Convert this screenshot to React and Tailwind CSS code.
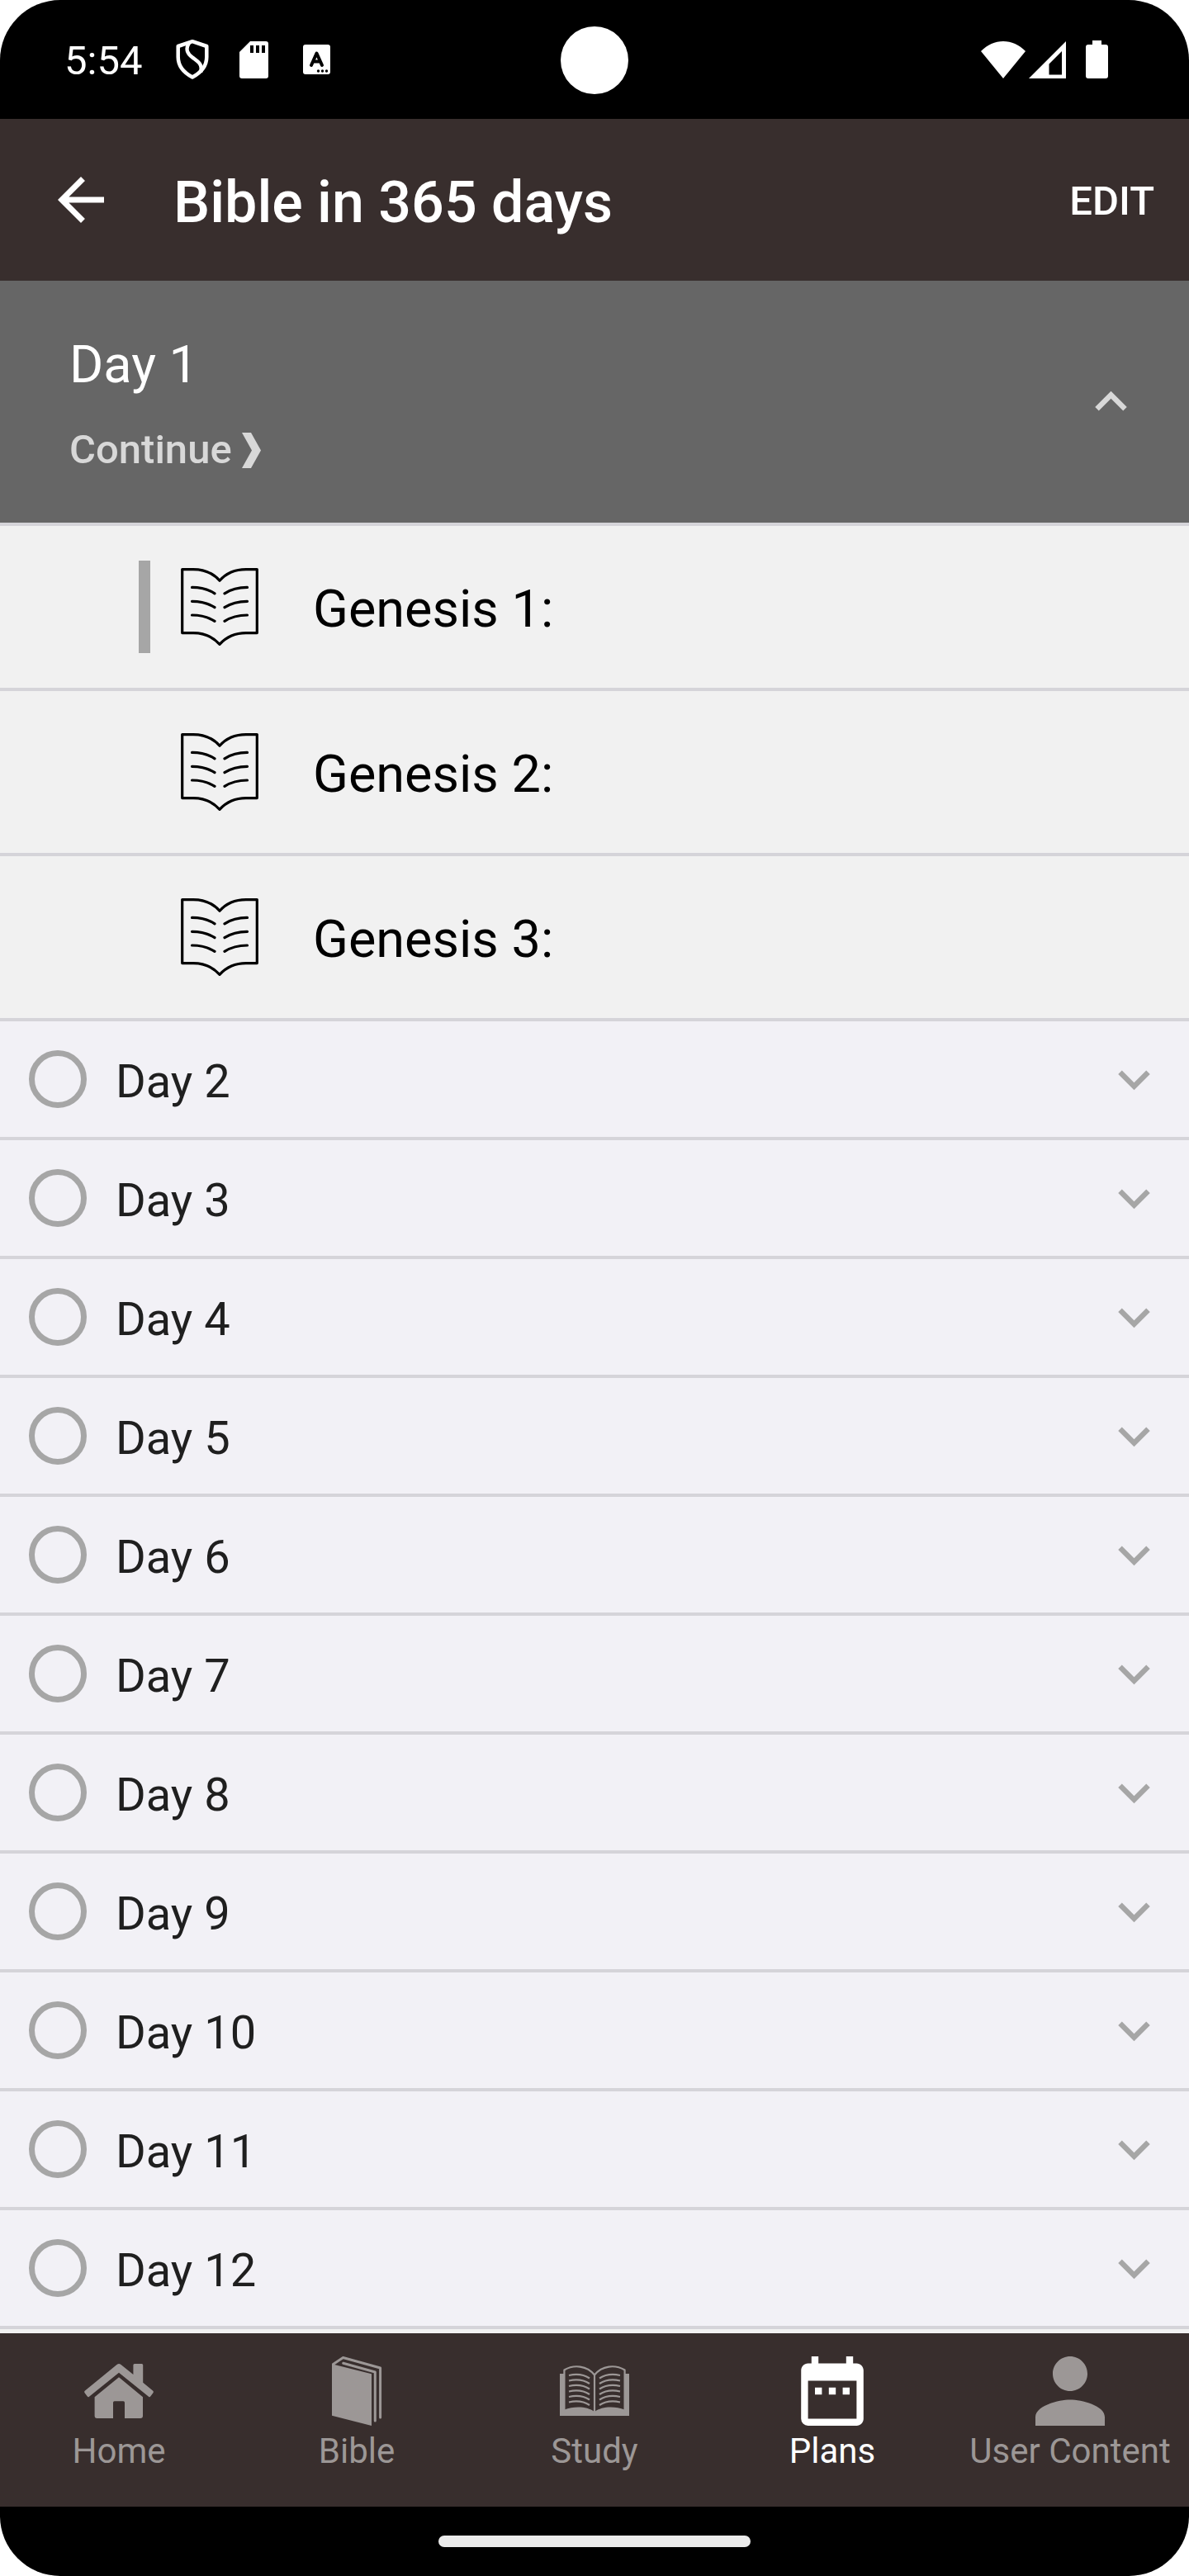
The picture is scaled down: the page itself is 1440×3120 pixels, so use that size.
import React, { useState } from "react";
import { MdArrowBack, MdExpandLess, MdExpandMore } from "react-icons/md";

const days = [2, 3, 4, 5, 6, 7, 8, 9, 10, 11, 12];
const chapters = ["Genesis 1:", "Genesis 2:", "Genesis 3:"];

function ShieldIcon() {
  return (
    <svg width="42" height="50" viewBox="0 0 42 50" fill="none" stroke="#fff" strokeWidth="4.5" strokeLinejoin="round">
      <path d="M21 3.2 38.3 9v13c0 11-7 19-17.300 24.500C10.700 41 3.700 33 3.700 22V9z" />
      <path d="M17 5c-5 8-2 13 4 17.500s13 8 10 18" />
    </svg>
  );
}

function SdCardIcon() {
  return (
    <svg width="35" height="45" viewBox="0 0 35 45">
      <path fill="#fff" d="M13 0h19a3 3 0 0 1 3 3v39a3 3 0 0 1-3 3H3a3 3 0 0 1-3-3V13z" />
      <path d="M13 5h4v9h-4zM20 5h4v9h-4zM27 5h4v9h-4z" />
    </svg>
  );
}

function KeyboardIcon() {
  return (
    <svg width="33" height="36" viewBox="0 0 33 36">
      <rect width="33" height="36" rx="3" fill="#fff" />
      <path d="m10 25 6.500-14.500L23 25M12 20.500h9" fill="none" stroke="#000" strokeWidth="4" strokeLinecap="round" strokeLinejoin="round" />
      <circle cx="18.500" cy="32" r="1.700" />
      <circle cx="23.500" cy="32" r="1.700" />
      <circle cx="28.500" cy="32" r="1.700" />
    </svg>
  );
}

function WifiIcon() {
  return (
    <svg width="54" height="45" viewBox="0 0 54 45" fill="#fff">
      <path d="M27 45 0 12C8 4 17 0 27 0s19 4 27 12z" />
    </svg>
  );
}

function SignalIcon() {
  return (
    <svg width="45" height="45" viewBox="0 0 45 45" fill="#fff" fillRule="evenodd">
      <path d="M45 0v45H0zM40 12 24.500 27.500v13H40z" />
    </svg>
  );
}

function BatteryIcon() {
  return (
    <svg width="27" height="46" viewBox="0 0 27 46" fill="#fff">
      <path d="M8 0h11v5h5a3 3 0 0 1 3 3v35a3 3 0 0 1-3 3H3a3 3 0 0 1-3-3V8a3 3 0 0 1 3-3h5z" />
    </svg>
  );
}

function OpenBookIcon() {
  return (
    <svg width="94" height="94" viewBox="0 0 94 94" fill="none" stroke="#000" strokeWidth="3.200" strokeLinecap="round" strokeLinejoin="round">
      <path d="M1.700 1.600H15C29 1.600 39 6 47 15.300 55 6 65 1.600 79 1.600h13.300v77H79c-14 0-24 5-32 13.700-8-8.700-18-13.700-32-13.700H1.700z" />
      <path d="M13.500 23.400c12 0 20 2.500 27.500 7.400M13.500 40.300c12 0 20 2.500 27.500 7.400M13.500 57c12 0 20 2.500 27.500 7.400M80.500 23.400c-12 0-20 2.500-27.500 7.400M80.500 40.300c-12 0-20 2.500-27.500 7.400M80.500 57c-12 0-20 2.500-27.500 7.400" />
    </svg>
  );
}

function HomeIcon() {
  return (
    <svg width="84" height="84" viewBox="0 0 84 84" fill="currentColor">
      <path d="M39.500 10q2.500-2 5 0l14.900 12V10.500q0-1.500 1.500-1.500h8.800q1.500 0 1.500 1.500v21.200L83 41.500q1.500 1.400.400 2.800l-3.200 4.200q-1 1.300-2.200.200L42 19.700 6 48.700q-1.200 1.100-2.200-.200L.600 44.300q-1.100-1.400.400-2.800z" />
      <path d="m42 25.300 29 24V72q0 3-3 3H49V56q0-1.700-1.700-1.700H36.700Q35 54.300 35 56v19H15.600q-3 0-3-3V49.300z" />
    </svg>
  );
}

function BibleIcon() {
  return (
    <svg width="84" height="84" viewBox="0 0 84 84">
      <path fill="currentColor" d="m12 9.300 48 12V84l-48-12.300z" />
      <path d="m13.500 9.500 12-8L70.600 14v60M25.700 8.300 64.300 19v59" fill="none" stroke="currentColor" strokeWidth="3" strokeLinecap="round" strokeLinejoin="round" />
    </svg>
  );
}

function StudyIcon() {
  return (
    <svg width="84" height="84" viewBox="0 0 84 84" fill="none" stroke="currentColor">
      <path strokeWidth="2.200" d="M5.400 65V16.500C17 9.500 33 11 42 22.500c9-11.500 25-13 36.600-6V65M42 22v46" />
      <path fill="currentColor" stroke="none" d="M0 21h5.500v43.500C17 60 33 60 42 67c9-7 25-7 36.500-2.500V21H84v51H0z" />
      <path
        strokeWidth="2.200"
        d="M11 23c9-2 18-1 25 3.500M11 29.500c9-2 18-1 25 3.500M11 36c9-2 18-1 25 3.500M11 42.500c9-2 18-1 25 3.500M11 49c9-2 18-1 25 3.500M11 55.500c9-2 18-1 25 3.500M73 23c-9-2-18-1-25 3.500M73 29.500c-9-2-18-1-25 3.500M73 36c-9-2-18-1-25 3.500M73 42.500c-9-2-18-1-25 3.500M73 49c-9-2-18-1-25 3.500M73 55.500c-9-2-18-1-25 3.500"
      />
    </svg>
  );
}

function PlansIcon() {
  return (
    <svg width="84" height="84" viewBox="2 2 20 20" fill="currentColor">
      <path d="M9 11H7v2h2v-2zm4 0h-2v2h2v-2zm4 0h-2v2h2v-2zm2-7h-1V2h-2v2H8V2H6v2H5c-1.110 0-1.990.9-1.990 2L3 20a2 2 0 0 0 2 2h14c1.100 0 2-.9 2-2V6c0-1.100-.9-2-2-2zm0 16H5V9h14v11z" />
    </svg>
  );
}

function UserIcon() {
  return (
    <svg width="84" height="84" viewBox="4 4 16 16" fill="currentColor">
      <path d="M12 12c2.210 0 4-1.790 4-4s-1.790-4-4-4-4 1.790-4 4 1.790 4 4 4zm0 2c-2.670 0-8 1.340-8 4v2h16v-2c0-2.660-5.330-4-8-4z" />
    </svg>
  );
}

const tabs = [
  { label: "Home", Icon: HomeIcon },
  { label: "Bible", Icon: BibleIcon },
  { label: "Study", Icon: StudyIcon },
  { label: "Plans", Icon: PlansIcon },
  { label: "User Content", Icon: UserIcon },
];

function StatusBar() {
  return (
    <div className="relative flex h-36 items-center justify-between bg-black pl-[78px] pr-[98px] text-white">
      <div className="flex items-center">
        <span className="pt-1 text-[49px] leading-[58px]">5:54</span>
        <div className="ml-10 flex items-center gap-9">
          <ShieldIcon />
          <SdCardIcon />
          <div className="pl-1.5">
            <KeyboardIcon />
          </div>
        </div>
      </div>
      <div className="absolute inset-x-0 top-8 mx-auto size-[82px] rounded-full bg-white" />
      <div className="flex items-center gap-1">
        <WifiIcon />
        <SignalIcon />
        <div className="pl-5">
          <BatteryIcon />
        </div>
      </div>
    </div>
  );
}

function DayRow({ day }) {
  const [done, setDone] = useState(false);

  return (
    <li className="flex h-36 items-center border-b-4 border-[#d5d4d9] bg-[#f2f1f6] pl-[35px] pr-7">
      <label className="flex grow items-center gap-[35px] text-[56px] leading-[66px] text-[#1f1f1f]">
        <input
          type="checkbox"
          checked={done}
          onChange={() => setDone(!done)}
          className="size-[70px] shrink-0 appearance-none rounded-full border-[7px] border-[#a6a6a6] checked:bg-[#a6a6a6]"
        />
        <span className="pt-1.5">Day {day}</span>
      </label>
      <button aria-label={`Expand day ${day}`} className="text-[#a6a6a6]">
        <MdExpandMore size={77} />
      </button>
    </li>
  );
}

export default function App() {
  const [open, setOpen] = useState(true);
  const [active, setActive] = useState("Plans");

  return (
    <div className="overflow-hidden rounded-[73px] bg-[#f1f1f1] font-[Roboto,sans-serif]">
      <StatusBar />

      <header className="flex h-[196px] items-center bg-[#382e2d] pl-14 pr-[42px] text-white">
        <button aria-label="Back">
          <MdArrowBack size={84} />
        </button>
        <h1 className="grow pl-[70px] pt-1.5 text-[70px] font-medium leading-[82px]">Bible in 365 days</h1>
        <button className="pt-1 text-[49px] font-medium leading-[58px]">EDIT</button>
      </header>

      <main>
        <section>
          <div className="flex items-center justify-between border-b-4 border-[#d5d4d9] bg-[#666666] py-[59px] pl-[84px] pr-14">
            <div className="flex flex-col items-start gap-[37px] pt-1.5">
              <h2 className="text-[63px] leading-[74px] text-white">Day 1</h2>
              <button className="flex items-center gap-3 text-[49px] font-medium leading-[58px] text-[#d8d8d8]">
                Continue
                <svg width="23" height="43" viewBox="0 0 23 43" fill="currentColor">
                  <path d="M0 0h11l12 21.500L11 43H0l12-21.500z" />
                </svg>
              </button>
            </div>
            <button aria-label="Collapse day 1" onClick={() => setOpen(!open)} className="text-[#d8d8d8]">
              <MdExpandLess size={77} />
            </button>
          </div>

          <ul className={open ? "" : "hidden"}>
            {chapters.map((chapter, i) => (
              <li key={chapter} className="flex h-[200px] items-center border-b-4 border-[#d5d4d9] pl-[168px]">
                <div className={i === 0 ? "h-28 w-3.5 bg-[#a6a6a6]" : "h-28 w-3.5"} />
                <a href="#" className="flex items-center gap-[66px] pl-[37px] text-[63px] leading-[74px] text-black">
                  <OpenBookIcon />
                  <span className="pt-1.5">{chapter}</span>
                </a>
              </li>
            ))}
          </ul>
        </section>

        <ul>
          {days.map((day) => (
            <DayRow key={day} day={day} />
          ))}
        </ul>
      </main>

      <nav className="mt-[5px] grid grid-cols-5 bg-[#382e2d] pb-[43px] pt-7">
        {tabs.map(({ label, Icon }) => (
          <button
            key={label}
            onClick={() => setActive(label)}
            className={
              active === label
                ? "flex flex-col items-center gap-1.5 text-white"
                : "flex flex-col items-center gap-1.5 text-[#9c9796]"
            }
          >
            <Icon />
            <span className="whitespace-nowrap text-[42px] leading-[49px]">{label}</span>
          </button>
        ))}
      </nav>

      <div className="flex h-[84px] items-center justify-center bg-black">
        <div className="h-3.5 w-[378px] rounded-full bg-[#ebebeb]" />
      </div>
    </div>
  );
}
